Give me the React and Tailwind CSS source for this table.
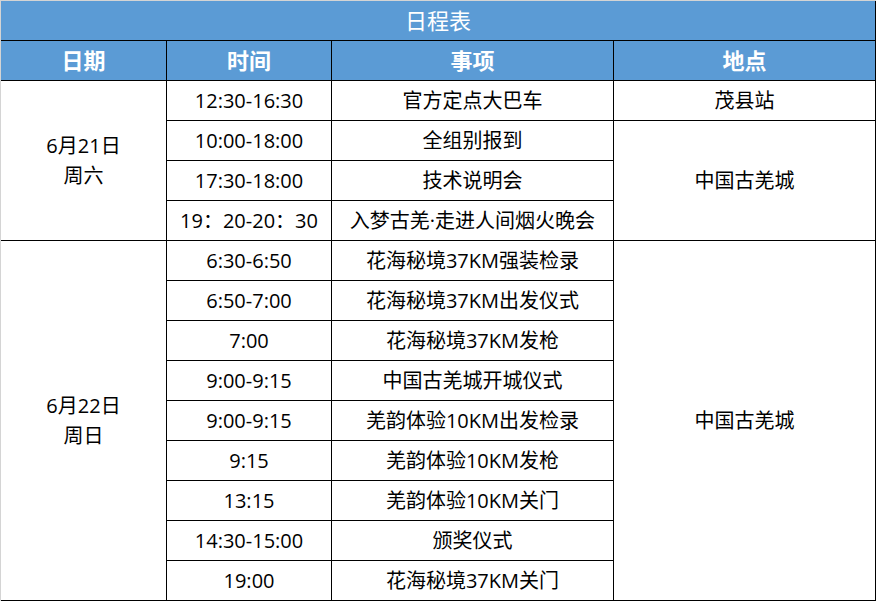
import React from "react";

const FONT = { fontFamily: '"Open Sans", "Noto Sans CJK SC", sans-serif' };

// day groups: each with items [time, event] and location spans
const DAYS = [
  {
    date: "6月21日",
    week: "周六",
    items: [
      ["12:30-16:30", "官方定点大巴车", { loc: "茂县站", span: 1 }],
      ["10:00-18:00", "全组别报到", { loc: "中国古羌城", span: 3 }],
      ["17:30-18:00", "技术说明会"],
      ["19：20-20：30", "入梦古羌·走进人间烟火晚会"],
    ],
  },
  {
    date: "6月22日",
    week: "周日",
    items: [
      ["6:30-6:50", "花海秘境37KM强装检录", { loc: "中国古羌城", span: 9 }],
      ["6:50-7:00", "花海秘境37KM出发仪式"],
      ["7:00", "花海秘境37KM发枪"],
      ["9:00-9:15", "中国古羌城开城仪式"],
      ["9:00-9:15", "羌韵体验10KM出发检录"],
      ["9:15", "羌韵体验10KM发枪"],
      ["13:15", "羌韵体验10KM关门"],
      ["14:30-15:00", "颁奖仪式"],
      ["19:00", "花海秘境37KM关门"],
    ],
  },
];

const cell = "h-10 p-0 border-r border-b border-black text-center align-middle text-[20px] text-black whitespace-nowrap";

export default function App() {
  return (
    <div className="w-[876px] h-[601px] bg-white border-l border-t border-[#d4d4d4] overflow-hidden" style={FONT}>
      <table className="w-[875px] table-fixed border-separate border-spacing-0">
        <colgroup>
          <col className="w-[166px]" />
          <col className="w-[165px]" />
          <col className="w-[282px]" />
          <col className="w-[262px]" />
        </colgroup>
        <thead>
          <tr>
            <th colSpan={4} className="h-10 p-0 bg-[#5b9bd5] border-r border-b border-black text-white text-[22px] font-normal">
              日程表
            </th>
          </tr>
          <tr>
            {["日期", "时间", "事项", "地点"].map(h => (
              <th key={h} className="h-10 p-0 bg-[#5b9bd5] border-r border-b border-black text-white text-[22px] font-bold">
                {h}
              </th>
            ))}
          </tr>
        </thead>
        <tbody>
          {DAYS.map(day =>
            day.items.map(([time, what, loc], i) => (
              <tr key={day.date + i}>
                {i === 0 && (
                  <td rowSpan={day.items.length} className={`${cell} leading-[30px]`}>
                    {day.date}
                    <br />
                    {day.week}
                  </td>
                )}
                <td className={cell}>{time}</td>
                <td className={cell}>{what}</td>
                {loc && (
                  <td rowSpan={loc.span} className={cell}>{loc.loc}</td>
                )}
              </tr>
            ))
          )}
        </tbody>
      </table>
    </div>
  );
}
